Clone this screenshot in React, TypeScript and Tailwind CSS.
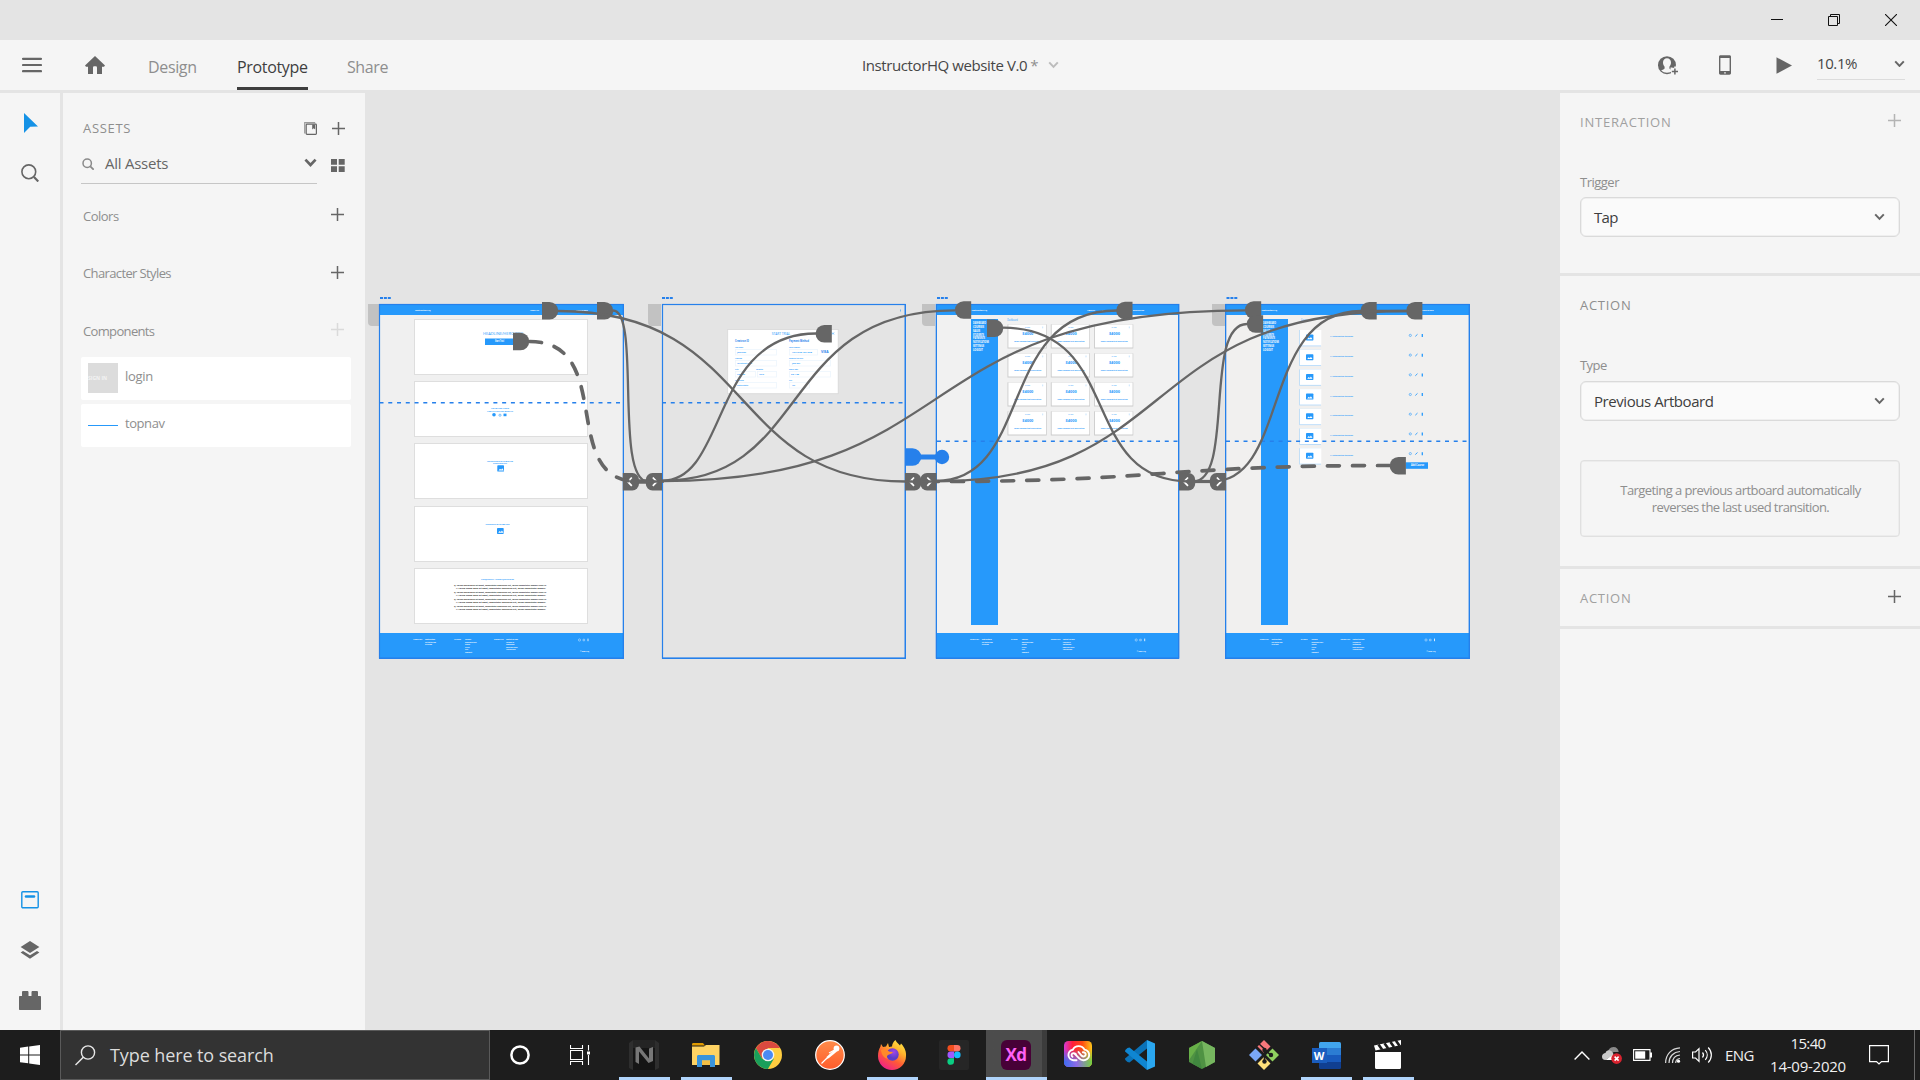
import type { ReactNode } from "react";

const BLUE = "#2699fb";
const SELECT = "#2680eb";
const WIRE = "#666666";

/* ---------- shared icons ---------- */

function Plus({ color = "#666666" }: { color?: string }) {
  return (
    <svg width="13" height="13" viewBox="0 0 13 13" className="shrink-0">
      <path d="M6.5 0v13M0 6.5h13" stroke={color} strokeWidth="1.5" />
    </svg>
  );
}

function Chevron({ w = 11, color = "#666666", sw = 2 }: { w?: number; color?: string; sw?: number }) {
  return (
    <svg width={w} height={w * 0.7} viewBox="0 0 11 7.7" className="shrink-0">
      <path d="M1.2 1.4 5.5 5.9l4.3-4.5" fill="none" stroke={color} strokeWidth={sw} />
    </svg>
  );
}

/* ---------- window chrome ---------- */

function TitleBar() {
  return (
    <div className="flex h-10 shrink-0 items-center justify-end bg-[#e4e4e4] pr-[23px]">
      <svg width="12" height="12" viewBox="0 0 12 12" className="mr-[45px]">
        <path d="M0 5.5h12" stroke="#111" />
      </svg>
      <svg width="12" height="12" viewBox="0 0 12 12" className="mr-[45px]">
        <path d="M.5 2.5h9v9h-9zM2.5 2.5v-2h9v9h-2" fill="none" stroke="#111" />
      </svg>
      <svg width="12" height="12" viewBox="0 0 12 12">
        <path d="M0 0l12 12M12 0L0 12" stroke="#111" strokeWidth="1.1" />
      </svg>
    </div>
  );
}

function Toolbar() {
  return (
    <div className="flex h-[53px] shrink-0 border-b-[3px] border-[#e4e4e4] bg-[#f5f5f5]">
      <div className="flex w-[862px] items-center pl-[22px]">
        <svg width="20" height="16" viewBox="0 0 20 16">
          <path d="M1 1.8h18M1 8h18M1 14.200h18" stroke="#666" strokeWidth="2.200" strokeLinecap="round" />
        </svg>
        <svg width="20" height="18" viewBox="0 0 20 18" className="ml-[43px]">
          <path d="M10 0 20 9.600 19 10.800h-2V18h-5v-6.300c0-1-.7-1.400-1.300-1.400h-1.400c-.6 0-1.300.4-1.300 1.400V18H3v-7.200H1L0 9.600z" fill="#666" />
        </svg>
        <div className="ml-[42px] flex h-full items-stretch text-[16px] text-[#8e8e8e]">
          <div className="flex w-[90px] items-center pl-px pt-1 tracking-[-0.35px]">Design</div>
          <div className="mr-[39px] flex w-[71px] items-center border-b-[3px] border-[#3e3e3e] pt-[7px] tracking-[-0.33px] text-[#3e3e3e]">Prototype</div>
          <div className="flex items-center pt-1 tracking-[-0.4px]">Share</div>
        </div>
      </div>
      <div className="flex flex-1 items-center">
        <span className="text-[15px] tracking-[-0.4px] text-[#464646]">InstructorHQ website V.0</span>
        <span className="ml-[3px] mr-[10px] text-[15px] text-[#8e8e8e]">*</span>
        <Chevron w={11} color="#bcbcbc" />
      </div>
      <div className="flex w-[262px] items-center">
        <svg width="20" height="19" viewBox="0 0 20 19" className="mr-[41px]">
          <circle cx="9" cy="9.200" r="9" fill="#666" />
          <path d="M9 2.300c2.300 0 4 1.700 4 4.200 0 1.700-.6 3.200-1.600 4.200v1.500c0 .5.300.8.800 1l2.700 1.200a8.300 8.300 0 0 1-11.800 0L5.800 13.200c.5-.2.800-.5.800-1v-1.500C5.600 9.700 5 8.200 5 6.500c0-2.500 1.700-4.200 4-4.200z" fill="#f5f5f5" />
          <path d="M12.500 14v-2.600h3v-3H20V19h-6.500z" fill="#f5f5f5" />
          <path d="M14.500 11.800V8h3.300c.1.800.1 1.800 0 2.500h-1.600v1.300z" fill="#666" />
          <path d="M16.900 12.400v6.200M13.800 15.500H20" stroke="#666" strokeWidth="1.500" />
        </svg>
        <svg width="12" height="20" viewBox="0 0 12 20" className="mr-[45px]">
          <path fillRule="evenodd" d="M1.500.3h9c.8 0 1.500.6 1.500 1.400v16.600c0 .8-.7 1.400-1.500 1.400h-9C.7 19.700 0 19.100 0 18.300V1.700C0 .9.700.3 1.500.3zM1.400 3v13h9.200V3zM5.200 17.200v1.300h1.600v-1.300z" fill="#666" />
        </svg>
        <svg width="16" height="17" viewBox="0 0 16 17" className="mr-[25px]">
          <path d="M.5.3 16 8.500.5 16.800z" fill="#666" />
        </svg>
        <div className="-mt-[1px] flex h-[30px] w-[88px] items-center justify-between border-b border-[#dcdcdc] pb-px">
          <span className="text-[15px] tracking-[-0.4px] text-[#464646]">10.1%</span>
          <Chevron w={11} />
        </div>
      </div>
    </div>
  );
}

/* ---------- left side ---------- */

function RailItem({ children }: { children: ReactNode }) {
  return <div className="flex h-[50px] items-center justify-center">{children}</div>;
}

function ToolRail() {
  return (
    <div className="flex w-[60px] shrink-0 flex-col bg-[#f5f5f5] pb-[5px] pt-[5px]">
      <RailItem>
        <svg width="14" height="20" viewBox="0 0 14 20" className="ml-0.5">
          <path d="M0 0 14 13.500 6.200 13.800 0 20z" fill="#1592e6" />
        </svg>
      </RailItem>
      <RailItem>
        <svg width="18" height="18" viewBox="0 0 18 18">
          <circle cx="7.800" cy="7.800" r="6.900" fill="none" stroke="#666" strokeWidth="1.600" />
          <path d="m13 13 4.300 4.500" stroke="#666" strokeWidth="2.200" />
        </svg>
      </RailItem>
      <div className="flex-1" />
      <RailItem>
        <svg width="18" height="18" viewBox="0 0 18 18">
          <rect x=".8" y=".8" width="16.400" height="16" rx="1" fill="none" stroke="#1592e6" strokeWidth="1.400" />
          <path d="M5 5.500h8" stroke="#1592e6" strokeWidth="2.600" strokeLinecap="round" />
        </svg>
      </RailItem>
      <RailItem>
        <svg width="20" height="18" viewBox="0 0 20 18">
          <path d="M10 0 19.400 6 10 12 .6 6z" fill="#666" />
          <path d="M.6 11.500 3 9.900l7 4.400 7-4.400 2.400 1.600L10 17.800z" fill="#666" />
        </svg>
      </RailItem>
      <RailItem>
        <svg width="22" height="19" viewBox="0 0 22 19">
          <path d="M1 5h2V1.200C3 .5 3.500 0 4.200 0h4C9 0 9.500.5 9.500 1.200V5h3V1.200c0-.7.5-1.200 1.200-1.200h4c.8 0 1.300.5 1.300 1.200V5h2c.6 0 1 .4 1 1v12c0 .6-.4 1-1 1H1c-.6 0-1-.4-1-1V6c0-.6.400-1 1-1z" fill="#666" />
        </svg>
      </RailItem>
    </div>
  );
}

function AssetsPanel() {
  return (
    <div className="flex w-[302px] shrink-0 flex-col bg-[#f5f5f5] pl-[18px] pr-[14px] pt-[22px]">
      <div className="flex h-[26px] items-center pl-0.5 pr-[6px]">
        <span className="flex-1 pt-0.5 text-[13px] tracking-[0.7px] text-[#8e8e8e]">ASSETS</span>
        <svg width="13" height="13" viewBox="0 0 13 13" className="mr-[15px]">
          <path d="M.7 11.500V.7h10.500" fill="none" stroke="#9a9a9a" strokeWidth="1.200" />
          <rect x="2.200" y="2.200" width="10.200" height="10.200" rx=".8" fill="none" stroke="#666" strokeWidth="1.200" />
          <path d="M8.200 2.500h3v5L9.700 6.300 8.200 7.500z" fill="#666" />
        </svg>
        <Plus />
      </div>
      <div className="flex h-[43px] pr-[6px]">
        <div className="mr-[14px] flex w-[236px] items-center border-b border-[#c6c6c6] pl-px pt-0.5">
          <svg width="12" height="12" viewBox="0 0 12 12" className="mt-0.5">
            <circle cx="5.200" cy="5.200" r="4.200" fill="none" stroke="#8a8a8a" strokeWidth="1.500" />
            <path d="m8.300 8.300 3.400 3.400" stroke="#8a8a8a" strokeWidth="1.800" />
          </svg>
          <span className="ml-[11px] flex-1 pt-px text-[15px] tracking-[-0.25px] text-[#666]">All Assets</span>
          <Chevron w={13} sw={2.300} />
        </div>
        <svg width="14" height="13" viewBox="0 0 14 13" className="mt-[17.5px]">
          <path d="M0 0h6v5.700H0zM7.700 0h6v5.700h-6zM0 7.300h6V13H0zM7.700 7.300h6V13h-6z" fill="#666" />
        </svg>
      </div>
      <div className="mt-4 flex h-8 items-center justify-between pl-0.5 pr-[7px] text-[13px] text-[#8e8e8e]">
        <span className="pt-0.5 tracking-[-0.5px]">Colors</span>
        <div className="-mt-[3px]"><Plus /></div>
      </div>
      <div className="mt-[25px] flex h-8 items-center justify-between pl-0.5 pr-[7px] text-[13px] text-[#8e8e8e]">
        <span className="pt-0.5 tracking-[-0.62px]">Character Styles</span>
        <div className="-mt-[2px]"><Plus /></div>
      </div>
      <div className="mb-2.5 mt-[26px] flex h-8 items-center justify-between pl-0.5 pr-[7px] text-[13px] text-[#8e8e8e]">
        <span className="pt-0.5 tracking-[-0.65px]">Components</span>
        <div className="-mt-[3px]"><Plus color="#dadada" /></div>
      </div>
      <div className="mb-1 flex h-[43px] items-center rounded-[2px] bg-white pl-[7px]">
        <div className="-mt-px flex h-[30px] w-[30px] items-center overflow-hidden bg-[#dcdcdc] text-[5px] leading-none font-bold text-[#f3f3f3]">
          <span className="whitespace-nowrap">SIGN IN</span>
        </div>
        <span className="ml-[7px] -mt-[3px] text-[13px] tracking-[-0.3px] text-[#8e8e8e]">login</span>
      </div>
      <div className="flex h-[43px] items-center rounded-[2px] bg-white pl-[7px]">
        <div className="-mt-px h-px w-[30px] bg-[#2699fb]" />
        <span className="ml-[7px] -mt-[3px] text-[13px] tracking-[-0.43px] text-[#8e8e8e]">topnav</span>
      </div>
    </div>
  );
}

/* ---------- canvas ---------- */

type TinyProps = { x: number; y: number; w: number; t: string; c?: string; s?: number; b?: boolean };

function Tiny({ x, y, w, t, c = "#fff", s = 2.4, b = true }: TinyProps) {
  return (
    <text x={x} y={y} fontSize={s} textLength={w} lengthAdjust="spacingAndGlyphs" fill={c} fontWeight={b ? 700 : 400}>
      {t}
    </text>
  );
}

function Artboard({ className, children }: { className: string; children?: ReactNode }) {
  return <div className={`absolute top-[211px] h-[355px] border border-[#2680eb] ${className}`}>{children}</div>;
}

function SiteFrame({ sidebar, inset = "ml-[34px]" }: { sidebar?: boolean; inset?: string }) {
  return (
    <div className="flex h-full flex-col">
      <div className="h-[10px] bg-[#2699fb]" />
      <div className="flex flex-1 flex-col items-start pb-2 pt-1">
        {sidebar && <div className={`${inset} w-[27px] flex-1 bg-[#2699fb]`} />}
      </div>
      <div className="h-[25px] bg-[#2699fb]" />
    </div>
  );
}

function FooterText({ dx }: { dx: number }) {
  const cols: [number, string[], number[]][] = [
    [425, ["Instructors", "Get Started Now", "Pricing"], [10, 11, 7]],
    [465, ["Courses", "Dashboard page", "Signup", "Pricing", "Login", "Support"], [6, 11.5, 5, 4.5, 3, 7]],
    [506, ["Contact Us page", "Facebook Us", "Instagram", "Email and Phone", "Address page"], [12, 8, 8.5, 11.5, 9.5]],
  ];
  return (
    <g transform={`translate(${dx} 0)`}>
      <Tiny x={413.3} y={640} w={9} t="COMPANY" s={1.8} />
      <Tiny x={454.3} y={640} w={6.5} t="PAGES" s={1.8} />
      <Tiny x={494} y={640} w={9.7} t="CONTACT" s={1.8} />
      {cols.map(([x, lines, ws]) => lines.map((l, i) => <Tiny key={`${x}${l}`} x={x} y={640 + i * 2.6} w={ws[i]} t={l} s={2} />))}
      <g fill="none" stroke="#d9edff" strokeWidth=".5">
        <circle cx="579.5" cy="640" r="1.1" />
        <path d="M583 639.200h1.600v1.600H583z" />
        <path d="M588 638.600v2.600" strokeWidth="1" />
      </g>
      <Tiny x={580} y={652} w={9} t="© 2020 IHQ" s={1.900} />
    </g>
  );
}

function NavText({ x, links }: { x: number; links: [number, number, string][] }) {
  return (
    <g>
      <Tiny x={x} y={311} w={15.5} t="InstructorHQ" s={2.4} />
      {links.map(([lx, w, t]) => (
        <Tiny key={lx} x={lx} y={311} w={w} t={t} s={2.2} />
      ))}
    </g>
  );
}

function SideText({ x }: { x: number }) {
  const rows: [string, number][] = [["DASHBOARD", 13], ["COURSES", 11], ["SALES", 7], ["STUDENTS", 11], ["PAYMENTS", 12], ["NOTIFICATIONS", 16], ["SETTINGS", 11], ["LOGOUT", 10]];
  return (
    <g>
      {rows.map(([t, w], i) => (
        <Tiny key={t} x={x} y={324 + i * 3.85} w={w} t={t} s={2.5} />
      ))}
    </g>
  );
}

function PictureIcon({ x, y, w = 7.4, h = 6 }: { x: number; y: number; w?: number; h?: number }) {
  return (
    <g>
      <rect x={x} y={y} width={w} height={h} rx=".7" fill={BLUE} />
      <path d={`M${x + 1.2} ${y + h - 1.2}l1.500-1.700 1.200 1 1-1.500 1.600 2.200z`} fill="#fff" />
    </g>
  );
}

function LandingPage() {
  const cards = [319.5, 381.5, 443.5, 506.5, 568.5];
  return (
    <g>
      {cards.map((y) => (
        <rect key={y} x="414.5" y={y} width="173" height="55" fill="#fff" stroke="#dedede" />
      ))}
      <NavText x={415} links={[[530, 9, "ABOUT US"], [560, 8, "LOGIN"], [576, 11.7, "REGISTER"]]} />
      <Tiny x={483} y={334.6} w={40} t="HEADLINE/HERO BOX" c={BLUE} s={3.5} b={false} />
      <rect x="485" y="338.500" width="34" height="6.500" fill={BLUE} />
      <Tiny x={495} y={342.4} w={9} t="Start Trial" s={2.6} />
      <Tiny x={491} y={409.3} w={18} t="HEADLINE HERO" c={BLUE} />
      <Tiny x={487} y={411.5} w={26} t="HOW THE CREATOR BENEFITS" c={BLUE} />
      <circle cx="494" cy="414.800" r="1.800" fill={BLUE} />
      <circle cx="500" cy="415.200" r="1.100" fill="none" stroke={BLUE} strokeWidth=".6" />
      <path d="M503.500 413.600h3v2.600h-3z" fill={BLUE} />
      <Tiny x={487} y={462.3} w={26} t="INSTRUCTOR DASHBOARD" c={BLUE} />
      <Tiny x={493} y={464.3} w={14} t="SCREENSHOT" c={BLUE} />
      <PictureIcon x={497.3} y={465.3} w={6.7} h={6.3} />
      <Tiny x={485.5} y={525} w={24} t="STUDENTS DASHBOARD" c={BLUE} />
      <PictureIcon x={497} y={528} w={6.7} h={6} />
      <Tiny x={481} y={580} w={33} t="FREQUENTLY ASKED QUESTIONS" c={BLUE} />
      {[0, 1, 2, 3].map((i) => (
        <g key={i}>
          <Tiny x={454} y={586.4 + i * 7} w={92.5} t="Q. Lorem ipsum dolor sit amet, consectetur adipiscing elit, lorem consectetur semper nunc in." c="#222" s={2.4} />
          <Tiny x={456} y={589 + i * 7} w={90} t="A. Lorem ipsum dolor sit amet, consectetur adipiscing elit, lorem consectetur semper." c="#222" s={2.4} />
        </g>
      ))}
      <FooterText dx={0} />
    </g>
  );
}

function SignupCard() {
  const labels: [number, number, number, string][] = [
    [735, 347.8, 8, "Your name"], [735, 359, 7, "Address"], [735, 370, 3.5, "City"], [756, 370, 7, "Country"], [735, 381, 9, "Currency"],
    [789, 347.8, 11, "Card number"], [789, 359, 14, "Name on the card"], [789, 370, 9, "Expiry date"], [789, 381, 3, "CVV"],
  ];
  const fields: [number, number, number][] = [
    [735.5, 349.5, 41], [735.5, 360.5, 41], [735.5, 371.5, 20], [757.5, 371.5, 19], [735.5, 382.5, 41],
    [789.5, 349.5, 28], [789.5, 360.5, 41], [789.5, 371.5, 41], [789.5, 382.5, 20],
  ];
  const values: [number, number, number, string][] = [
    [737, 353, 9, "John Doe"], [737, 364, 15, "123 Street Road"], [737, 375, 8, "London"], [759, 375, 5, "12345"], [737, 386, 11, "United States"],
    [792, 353, 20, "1234 5678 1234 5678"], [792, 364, 8, "John Doe"], [791, 375, 8, "09 / 22"], [792, 386, 3, "123"],
  ];
  return (
    <g>
      <rect x="727.700" y="329.500" width="110.500" height="64.200" fill="#fff" stroke="#d8d8d8" strokeWidth=".8" />
      <Tiny x={771.7} y={334.8} w={18.5} t="START TRIAL" c={BLUE} s={3.3} b={false} />
      <Tiny x={735} y={342} w={14} t="Create an ID" c={SELECT} s={2.7} />
      <Tiny x={789} y={342} w={20} t="Payment Method" c={SELECT} s={2.7} />
      <path d="M832 332.500l2 2M834 332.500l-2 2M900.500 309.500v2" stroke={BLUE} strokeWidth=".6" />
      {fields.map(([x, y, w]) => (
        <rect key={`${x}-${y}`} x={x} y={y} width={w} height="5.500" fill="none" stroke="#edf5fd" strokeWidth=".8" />
      ))}
      {labels.map(([x, y, w, t]) => (
        <Tiny key={`${x}-${y}`} x={x} y={y} w={w} t={t} c={BLUE} s={2.2} />
      ))}
      {values.map(([x, y, w, t]) => (
        <Tiny key={`${x}-${y}`} x={x} y={y} w={w} t={t} c={BLUE} s={2.4} />
      ))}
      <Tiny x={821} y={353.3} w={7.5} t="VISA" c={SELECT} s={2.8} />
    </g>
  );
}

function DashboardPage() {
  const xs = [1007.7, 1051, 1094.3];
  const ys = [324.3, 353.3, 382.3, 411.3];
  return (
    <g>
      <NavText x={971.5} links={[[1087, 8, "ABOUT"], [1102, 8.5, "LOGIN"], [1132.7, 11.5, "REGISTER"]]} />
      <SideText x={973} />
      <Tiny x={1007.3} y={321.2} w={10.5} t="Dashboard" c={BLUE} s={2.6} b={false} />
      {ys.map((y) =>
        xs.map((x) => (
          <g key={`${x}-${y}`}>
            <rect x={x - 0.2} y={y} width="39.200" height="24.200" fill="#cccccc" />
            <rect x={x + 0.7} y={y + 0.2} width="37.600" height="23" fill="#fff" />
            <Tiny x={x + 17.3} y={y + 3.8} w={5} t="SALES" c={BLUE} s={2} b={false} />
            <path d={`M${x + 35} ${y + 2.2}v1.800`} stroke="#b9dcfb" strokeWidth=".8" />
            <Tiny x={x + 14.6} y={y + 10.6} w={11} t="$4000" c={BLUE} s={3.5} />
            <Tiny x={x + 6.5} y={y + 17.8} w={27} t="some random text description" c={BLUE} s={2.4} />
          </g>
        )),
      )}
      <FooterText dx={556.7} />
    </g>
  );
}

function CoursesPage() {
  return (
    <g>
      <NavText x={1261.5} links={[[1376.7, 8.5, "ABOUT"], [1392, 8, "LOGIN"], [1422, 11.7, "REGISTER"]]} />
      <SideText x={1263} />
      <Tiny x={1301} y={321.2} w={8} t="Courses" c={BLUE} s={2.6} b={false} />
      {[0, 1, 2, 3, 4, 5, 6].map((i) => {
        const y = 330 + i * 19.7;
        return (
          <g key={i}>
            <rect x="1299.300" y={y} width="21.700" height="16.300" fill="#b0d7fa" />
            <rect x="1300" y={y} width="21.300" height="15.500" fill="#fff" />
            <PictureIcon x={1306} y={y + 4.5} />
            <Tiny x={1330} y={y + 7.4} w={23} t="#1  Introduction to design" c={BLUE} s={2.3} />
            <circle cx="1410.300" cy={y + 5.4} r="1.100" fill="none" stroke={BLUE} strokeWidth=".6" />
            <path d={`M1415.300 ${y + 6.4}l2.200-2.100`} stroke={BLUE} strokeWidth=".9" />
            <path d={`M1422.300 ${y + 4}v3`} stroke={BLUE} strokeWidth="1.300" />
          </g>
        );
      })}
      <rect x="1405.500" y="462.300" width="22.500" height="6.500" fill={BLUE} />
      <Tiny x={1411} y={466.4} w={13} t="Add Course" s={2.5} />
      <FooterText dx={846.5} />
    </g>
  );
}

/* Half-round grips at the ends of the wires; `dir` is the rounded side. */
function Grip({ x, y, dir, fill = WIRE }: { x: number; y: number; dir: "l" | "r"; fill?: string }) {
  const d =
    dir === "r"
      ? `M${x} ${y}h7.500a8.750 8.750 0 0 1 0 17.500h-7.500z`
      : `M${x + 16.2} ${y}h-7.500a8.750 8.750 0 0 0 0 17.500h7.500z`;
  return <path d={d} fill={fill} />;
}

function Target({ x, dir }: { x: number; dir: "l" | "r" }) {
  const y = 473;
  const c = dir === "r" ? `M${x + 9} ${y + 4.5}l-4 4.200 4 4.200` : `M${x + 7} ${y + 4.5}l4 4.200-4 4.200`;
  const body =
    dir === "r"
      ? `M${x} ${y}h9.500a6.700 6.700 0 0 1 6.700 6.700v4.100a6.700 6.700 0 0 1-6.700 6.700h-9.500z`
      : `M${x + 16.2} ${y}h-9.500a6.700 6.700 0 0 0-6.700 6.700v4.100a6.700 6.700 0 0 0 6.700 6.700h9.500z`;
  return (
    <g>
      <path d={body} fill={WIRE} />
      <path d={c} fill="none" stroke="#fff" strokeWidth="1.700" />
    </g>
  );
}

function Dots({ x }: { x: number }) {
  return <path d={`M${x} 297h3v2h-3zM${x + 3.9} 297h3v2h-3zM${x + 7.8} 297h3v2h-3z`} fill={SELECT} />;
}

function Canvas() {
  return (
    <div className="relative flex-1 overflow-hidden bg-[#e4e4e4]">
      <div className="absolute left-[3px] top-[211px] h-[22px] w-[11px] rounded-bl-[4px] bg-[#c2c2c2]" />
      <div className="absolute left-[283px] top-[211px] h-[22px] w-[13px] rounded-bl-[4px] bg-[#c2c2c2]" />
      <div className="absolute left-[557px] top-[211px] h-[22px] w-[13px] rounded-bl-[4px] bg-[#c2c2c2]" />
      <div className="absolute left-[847px] top-[211px] h-[22px] w-[13px] rounded-bl-[4px] bg-[#c2c2c2]" />
      <Artboard className="left-[14px] w-[245px] bg-[#f0f0f0]"><SiteFrame /></Artboard>
      <Artboard className="left-[297px] w-[244px]" />
      <Artboard className="left-[571px] w-[243px] bg-[#f1f1f1]"><SiteFrame sidebar /></Artboard>
      <Artboard className="left-[860px] w-[245px] bg-[#f1f0ef]"><SiteFrame sidebar inset="ml-[35px]" /></Artboard>

      <svg className="absolute left-0 top-0" width="1195" height="937" viewBox="365 93 1195 937" fontFamily="'Open Sans', sans-serif">
        <Dots x={380} />
        <Dots x={662} />
        <Dots x={937} />
        <Dots x={1226.5} />
        <LandingPage />
        <SignupCard />
        <DashboardPage />
        <CoursesPage />

        <g stroke={SELECT} strokeWidth="1.400" strokeDasharray="4 4.760">
          <path d="M379.500 402.700H623M662 402.700H905" />
          <path d="M937 441.300H1179M1226 441.300H1469" />
        </g>
        <g fill="none" stroke={SELECT} strokeWidth="1.200">
          <rect x="379.500" y="304.500" width="243.800" height="353.500" />
          <rect x="662.500" y="304.500" width="242.600" height="353.500" />
          <rect x="936.300" y="304.500" width="242.500" height="353.500" />
          <rect x="1225.700" y="304.500" width="243.500" height="353.500" />
        </g>

        <Grip x={542} y={302} dir="r" />
        <Grip x={597} y={302} dir="r" />
        <Grip x={513} y={332.7} dir="r" />
        <Grip x={815.6} y={325} dir="l" />
        <Grip x={955} y={301.3} dir="l" />
        <Grip x={1116.3} y={301.8} dir="l" />
        <Grip x={987} y={319.5} dir="r" />
        <Grip x={1245} y={301.3} dir="l" />
        <Grip x={1246.9} y={315.3} dir="l" />
        <Grip x={1360.5} y={302} dir="l" />
        <Grip x={1406.2} y={302} dir="l" />
        <Grip x={1389.7} y={457} dir="l" />

        <Target x={622.8} dir="r" />
        <Target x={645.8} dir="l" />
        <Target x={905} dir="r" />
        <Target x={920.3} dir="l" />
        <Target x={1179} dir="r" />
        <Target x={1209.9} dir="l" />

        <path d="M912 457h30" stroke={SELECT} strokeWidth="5" />
        <Grip x={905} y={448.3} dir="r" fill={SELECT} />
        <circle cx="942" cy="457" r="7.200" fill={SELECT} />

        <g fill="none" stroke={WIRE} strokeWidth="2.300">
          <path d="M558 311C758 311 725.500 481.500 905.500 481.500H912" />
          <path d="M613 310.500C641 310.500 614 481.500 648 481.500" />
          <path d="M662 480.800C728 480.800 710 333.500 816 333.500" />
          <path d="M662 480.800C812 480.800 777 310.300 955 310.300" />
          <path d="M662 481C970 481 903 310.300 1246 310.300" />
          <path d="M936 481C1034 481 996 310.500 1117 310.500" />
          <path d="M936 481.300C1181 481.300 1136 311 1406 311" />
          <path d="M1003 327.700C1125 327.700 1077 481.500 1190 481.500" />
          <path d="M1193 481.500C1235 481.500 1203 324 1247 324" />
          <path d="M1212 481.500C1290 481.500 1260 311 1361 311" />
          <path d="M1370 311h40" />
          <path d="M648 481.500H664M922 481.500H938" />
        </g>
        <g fill="none" stroke={WIRE}>
          <path d="M638 481.500h10" strokeWidth="4.500" />
          <path d="M1192 481.500h22" strokeWidth="3.200" />
        </g>
        <g fill="none" stroke={WIRE} strokeWidth="3.700" strokeLinecap="round" strokeDasharray="12 13.100">
          <path d="M529.500 341.500C617 341.500 557 481.500 638 481.500" />
          <path d="M1389.700 465.500C1162 465.500 1162 481.500 936 481.500" />
        </g>
      </svg>
    </div>
  );
}

/* ---------- right side ---------- */

function Select({ children, className }: { children: string; className: string }) {
  return (
    <div className="flex h-10 items-center justify-between rounded-[6px] border border-[#dadada] bg-[#fafafa] pl-[13px] pr-[14px] text-[15px] text-[#3e3e3e] shadow-[inset_0_0_0_0.5px_#e4e4e4]">
      <span className={className}>{children}</span>
      <Chevron w={11} />
    </div>
  );
}

function Inspector() {
  return (
    <div className="flex w-[360px] shrink-0 flex-col gap-[3px] bg-[#e4e4e4] text-[13px] text-[#8e8e8e]">
      <div className="flex h-[180px] flex-col bg-[#f5f5f5] px-5 pt-[19px]">
        <div className="-mr-px flex h-5 items-center justify-between text-[#a0a0a0]">
          <span className="pt-0.5 tracking-[0.78px]">INTERACTION</span>
          <div className="-mt-[3px]"><Plus color="#b4b4b4" /></div>
        </div>
        <div className="mt-[39px] flex h-[22px] items-center pt-px tracking-[-0.5px]">Trigger</div>
        <div className="mt-1"><Select className="tracking-[-0.7px]">Tap</Select></div>
      </div>
      <div className="flex h-[290px] flex-col bg-[#f5f5f5] px-5 pt-[19px]">
        <div className="flex h-5 items-center pt-0.5 tracking-[0.73px]">ACTION</div>
        <div className="mt-[39px] flex h-[22px] items-center pt-0.5 tracking-[-0.56px]">Type</div>
        <div className="mb-[39px] mt-[5px]"><Select className="tracking-[-0.44px]">Previous Artboard</Select></div>
        <div className="flex h-[77px] flex-col items-center justify-center rounded-[4px] border border-[#e0e0e0] pl-px text-center leading-[17px] shadow-[inset_0_0_0_0.5px_#e4e4e4]">
          <div className="tracking-[-0.57px]">Targeting a previous artboard automatically</div>
          <div className="tracking-[-0.59px]">reverses the last used transition.</div>
        </div>
      </div>
      <div className="flex h-[57px] items-center justify-between bg-[#f5f5f5] pl-5 pr-[19px] text-[#a0a0a0]">
        <span className="pt-0.5 tracking-[0.73px]">ACTION</span>
        <div className="-mt-[2px]"><Plus /></div>
      </div>
      <div className="flex-1 bg-[#f5f5f5]" />
    </div>
  );
}

/* ---------- taskbar ---------- */

function Task({ open, active, children }: { open?: boolean; active?: boolean; children: ReactNode }) {
  return (
    <div className={`relative flex h-full w-[62px] items-center justify-center ${active ? "border-l border-[#1d1d1d] pr-px bg-gradient-to-r from-[#4c4c4c] from-[91%] to-[#3c3c3c] to-[91%]" : ""}`}>
      {children}
      {open && <div className={`absolute bottom-0 h-[3px] bg-[#b0d4fb] ${active ? "inset-x-0" : "left-1.5 w-[51px]"}`} />}
    </div>
  );
}

function Taskbar() {
  return (
    <div className="flex h-[50px] shrink-0 bg-[#1d1d1d]">
      <div className="flex w-[60px] items-center justify-center">
        <svg width="20" height="20" viewBox="0 0 20 20">
          <path d="M0 2.800 8.200 1.600v7.800H0zM9.200 1.500 20 0v9.400H9.200zM0 10.400h8.200v7.900L0 17.200zM9.200 10.400H20V20L9.200 18.500z" fill="#fff" />
        </svg>
      </div>
      <div className="flex w-[430px] items-center border border-[#5a5a5a] bg-[#333] pl-[14px]">
        <svg width="21" height="21" viewBox="0 0 21 21">
          <circle cx="13" cy="7.500" r="6.600" fill="none" stroke="#e8e8e8" strokeWidth="1.400" />
          <path d="M8.300 12.200.5 20" stroke="#e8e8e8" strokeWidth="1.500" />
        </svg>
        <span className="ml-[14px] text-[18px] tracking-[-0.1px] text-[#dcdcdc]">Type here to search</span>
      </div>
      <div className="flex w-[60px] items-center justify-center">
        <svg width="20" height="20" viewBox="0 0 20 20">
          <circle cx="10" cy="10" r="8.600" fill="none" stroke="#fff" strokeWidth="2.500" />
        </svg>
      </div>
      <div className="flex w-[63px] items-center justify-center pr-[3px]">
        <svg width="20" height="20" viewBox="0 0 20 20">
          <path d="M.5 0v3.500h12V0M.5 5.500h12v9H.5zM.5 20v-3.500h12V20M18.500 0v5.500M18.500 10v10" fill="none" stroke="#fff" strokeWidth="1.100" />
          <path d="M17 6.500h3v3h-3z" fill="#fff" />
        </svg>
      </div>

      <Task open>
        <svg width="30" height="30" viewBox="0 0 30 30">
          <path d="M0 3 4 0v30L0 28zM30 3l-4-3v30l4-2z" fill="#2e2e2e" />
          <path d="M4 0h22v30H4z" fill="#151515" />
          <path d="M4 0h22v8H4z" fill="#242424" />
          <path d="M6.500 22V7.500l4-1L20 18.500V8.500l4-1.500v14l-4.500 2L10 11.500V24z" fill="#777" />
        </svg>
      </Task>
      <Task open>
        <svg width="28" height="24" viewBox="0 0 28 24">
          <path d="M0 1.500C0 .7.500 0 1.300 0H11l2 2.500H0z" fill="#e09a00" />
          <path d="M0 3.500h12l2-1.500h13.500v20H0z" fill="#ffd363" />
          <path d="M5 24V13.500c0-.8.600-1.500 1.500-1.500h15c.9 0 1.500.7 1.500 1.500V24h-5v-6.500h-8V24z" fill="#3a94dc" />
          <path d="M10 17.500h8V22h-8z" fill="#f3bf45" />
        </svg>
      </Task>
      <Task>
        <svg width="28" height="28" viewBox="0 0 28 28">
          <circle cx="14" cy="14" r="14" fill="#ffcd40" />
          <path d="M14 7h12.100A14 14 0 0 0 1.900 7L8 17.500z" fill="#db4a3f" />
          <path d="M1.900 7a14 14 0 0 0 12 21l6.100-10.500-6 2.500-6-2.500z" fill="#1a9f5b" />
          <circle cx="14" cy="14" r="6.300" fill="#f3f3f3" />
          <circle cx="14" cy="14" r="5" fill="#4a8af4" />
        </svg>
      </Task>
      <Task>
        <svg width="30" height="30" viewBox="0 0 30 30">
          <defs>
            <linearGradient id="pm" x1="0" y1="0" x2="0" y2="1"><stop offset="0" stopColor="#ff8c4a" /><stop offset="1" stopColor="#ff5c2b" /></linearGradient>
          </defs>
          <circle cx="15" cy="15" r="14.300" fill="url(#pm)" stroke="#fff" strokeWidth="1.200" />
          <circle cx="21.500" cy="8.500" r="2.900" fill="#fff" />
          <path d="M19.500 9.500 12 16.500l-1 3 3-1.500 8-6.500z" fill="#fff" />
          <path d="M12 18 6.500 23.500M14 13l5.500-3" stroke="#fff" strokeWidth="1.200" />
        </svg>
      </Task>
      <Task open>
        <svg width="30" height="30" viewBox="0 0 30 30">
          <defs>
            <linearGradient id="ff" x1=".9" y1="0" x2=".3" y2="1"><stop offset="0" stopColor="#fff04a" /><stop offset=".35" stopColor="#ffb22c" /><stop offset=".65" stopColor="#ff5a36" /><stop offset="1" stopColor="#f0208a" /></linearGradient>
            <radialGradient id="fg" cx=".6" cy=".3"><stop offset="0" stopColor="#a345e8" /><stop offset="1" stopColor="#5a3ec8" /></radialGradient>
          </defs>
          <path d="M18.500 0c1 2.500 3 3.500 4.500 5.500l1-2c4 4 5.500 9 5 12.500A14 14 0 0 1 1 16C1 12 2 9 3.500 6.500L4 4l2 3 3-.5L11 3l1 4 3-.5c0-2.500 1.500-5 3.500-6.500z" fill="url(#ff)" />
          <circle cx="15.500" cy="14.500" r="6.200" fill="url(#fg)" />
          <path d="M4 10c3-2 6-1 8 1.500 1.500.5 3 .3 4 .5-1 2-3 2-4.500 2.800-2 .5-2 2.500-.5 4.200-4-1-6.500-4-7-9z" fill="#ff8a2a" />
        </svg>
      </Task>
      <Task>
        <svg width="30" height="30" viewBox="0 0 30 30">
          <rect width="30" height="30" rx="2" fill="#262626" />
          <g transform="translate(8.500 5)">
            <path d="M6.500 0v6.600H3.300a3.300 3.300 0 0 1 0-6.600z" fill="#f24e1e" />
            <path d="M6.500 0h3.200a3.300 3.300 0 0 1 0 6.600H6.500z" fill="#ff7262" />
            <path d="M6.500 6.600v6.600H3.300a3.300 3.300 0 0 1 0-6.600z" fill="#a259ff" />
            <circle cx="9.800" cy="9.900" r="3.300" fill="#1abcfe" />
            <path d="M6.500 13.200v3.300a3.300 3.300 0 1 1-3.200-3.300z" fill="#0acf83" />
          </g>
        </svg>
      </Task>
      <Task open active>
        <div className="flex h-[30px] w-[30px] items-center justify-center rounded-[6px] bg-[#470137] pb-px text-[17px] font-bold tracking-[-0.5px] text-[#ff61f6]">Xd</div>
      </Task>
      <Task>
        <svg width="28" height="26" viewBox="0 0 28 26" className="-mt-0.5">
          <defs>
            <linearGradient id="cc1" x1="0" x2="1"><stop offset="0" stopColor="#d83bd8" /><stop offset=".3" stopColor="#ff1e3c" /><stop offset=".65" stopColor="#ff4a10" /><stop offset="1" stopColor="#ffc61a" /></linearGradient>
            <linearGradient id="cc2" x1="0" x2="1"><stop offset="0" stopColor="#3b6df0" /><stop offset=".45" stopColor="#8d6ae8" /><stop offset="1" stopColor="#74d23c" /></linearGradient>
            <linearGradient id="cc3" x1="0" y1="0" x2="0" y2="1"><stop offset=".3" stopColor="#000" /><stop offset=".8" stopColor="#fff" /></linearGradient>
            <mask id="ccm"><rect width="28" height="26" fill="url(#cc3)" /></mask>
          </defs>
          <rect width="28" height="26" rx="4.500" fill="url(#cc1)" />
          <rect width="28" height="26" rx="4.500" fill="url(#cc2)" mask="url(#ccm)" />
          <g fill="none" stroke="#fff" strokeWidth="1.900" strokeLinecap="round">
            <path d="M12.500 19.200H9.300a5.300 5.300 0 0 1-.5-10.500A6.600 6.600 0 0 1 20.500 8.600a5.300 5.300 0 0 1-1.300 10.600c-1.700 0-2.800-.6-4-1.800l-4.200-4.300" />
            <path d="M8.500 15.800a2 2 0 0 1 1-3.700c1 0 1.700.4 2.400 1.100M14.500 11l3.200 3.800c1.500 1.400 4 .4 4-1.300 0-1.600-1.200-2.400-2.800-2.300" />
          </g>
        </svg>
      </Task>
      <Task>
        <svg width="30" height="30" viewBox="0 0 30 30">
          <path d="M22 0v8.500L4.500 22.500 2.500 22 .300 20 0 18.500z" fill="#0a72b8" />
          <path d="M22 30v-8.500L4.500 7.500 2.500 8 .3 10 0 11.500z" fill="#0f86d2" />
          <path d="M22 0l8 3.500v23L22 30z" fill="#2aa7f0" />
        </svg>
      </Task>
      <Task>
        <svg width="26" height="28" viewBox="0 0 26 28">
          <path d="M13 0 26 7v14l-13 7L0 21V7z" fill="#4f9243" />
          <path d="M13 0 26 7v14l-9 5z" fill="#76b65f" />
          <path d="M13 0 0 7v12z" fill="#68b048" />
          <path d="M8 8 13 28 3.500 22.800z" fill="#41873f" />
        </svg>
      </Task>
      <Task>
        <svg width="30" height="30" viewBox="0 0 30 30">
          <path d="M15 0l6.500 6.500-6.500 6.500-6.500-6.500z" fill="#f7777b" />
          <path d="M6.500 8.500l6.500 6.500-6.500 6.500L0 15z" fill="#7aa7f7" />
          <path d="M23.500 8.500 30 15l-6.500 6.500L17 15z" fill="#8fd05f" />
          <path d="M15 17l6.500 6.500L15 30l-6.500-6.500z" fill="#ffe07a" />
          <path d="M9.500 3.500 15.500 9v14M15.500 9l6 6" fill="none" stroke="#1d1d1d" strokeWidth="1.600" />
          <circle cx="15.500" cy="10" r="2.200" fill="#1d1d1d" />
          <circle cx="15.500" cy="21.500" r="2.200" fill="#1d1d1d" />
          <circle cx="22" cy="15" r="2.200" fill="#1d1d1d" />
        </svg>
      </Task>
      <Task open>
        <div className="relative h-[27px] w-[29px]">
          <div className="ml-[7px] flex h-full flex-col overflow-hidden rounded-[1.500px]">
            <div className="flex-1 bg-[#41a5ee]" />
            <div className="flex-1 bg-[#2b7cd3]" />
            <div className="flex-1 bg-[#185abd]" />
            <div className="flex-1 bg-[#103f91]" />
          </div>
          <div className="absolute left-0 top-[6px] flex h-[15px] w-[15px] items-center justify-center bg-[#1a5dbe] text-[11px] leading-none font-bold text-white">W</div>
        </div>
      </Task>
      <Task open>
        <svg width="28" height="30" viewBox="0 0 28 30">
          <path d="M1 12h26v15.500c0 .8-.6 1.500-1.400 1.500H2.400C1.600 29 1 28.300 1 27.500z" fill="#fff" />
          <path d="M0 5.500 27 0v5L1.500 10.500z" fill="#fff" />
          <path d="M4.500 4.500l3.500 5M10.500 3.200l3.500 5M16.500 2l3.500 5M22 .8l3.500 5" stroke="#1d1d1d" strokeWidth="2.600" />
        </svg>
      </Task>

      <div className="flex flex-1 items-center justify-end text-[15px] text-[#f0f0f0]">
        <svg width="16" height="9" viewBox="0 0 16 9" className="mr-3">
          <path d="M.6 8.400 8 1l7.400 7.400" fill="none" stroke="#fff" strokeWidth="1.400" />
        </svg>
        <svg width="20" height="17" viewBox="0 0 20 17" className="mr-[11px]">
          <path d="M6 7c-.5-4 2-7 5.500-7 3 0 5 2 5.200 5H12z" fill="#8a8a8a" />
          <path d="M3.500 13C1 13 0 11.500 0 9.500S2 6 3.500 6c.5-2 2.500-3 4.500-2.500 2 .5 3 2 3.500 4z" fill="#c9c9c9" />
          <path d="M3.500 13 11 7.500V13z" fill="#fff" />
          <circle cx="14.600" cy="11.600" r="5.300" fill="#d8232f" />
          <path d="m12.600 9.600 4 4M16.600 9.600l-4 4" stroke="#fff" strokeWidth="1.500" />
        </svg>
        <svg width="19" height="12" viewBox="0 0 19 12" className="mr-[13px]">
          <path d="M.600.600h16.400v10.800H.6zM17.500 4h1v4h-1z" fill="none" stroke="#fff" strokeWidth="1.100" />
          <path d="M2.200 2.300h10v7.400h-10z" fill="#fff" />
        </svg>
        <svg width="16" height="16" viewBox="0 0 16 16" className="mr-[11px]">
          <g fill="none" stroke="#d8d8d8" strokeWidth="1.200">
            <path d="M.6 16C.6 7.500 6.500 1.200 15 .8" />
            <path d="M4 16C4 9.500 8.500 5 15 4.500" />
            <path d="M7.500 16c0-4.500 3-7.500 7.500-8" />
            <path d="M10.700 16c0-2.500 1.800-4.300 4.300-4.500" />
          </g>
          <circle cx="13.500" cy="14.200" r="1.600" fill="#fff" />
        </svg>
        <svg width="21" height="18" viewBox="0 0 21 18" className="mr-[12px]">
          <path d="M.6 6h3L7 2.600v12.800L3.600 12h-3z" fill="none" stroke="#fff" strokeWidth="1.200" />
          <path d="M10.500 6.500c1.300 1.500 1.300 3.500 0 5M13.300 4.200c2.500 2.800 2.500 6.800 0 9.600M16.200 1.500c4.200 4.300 4.200 10.700 0 15" fill="none" stroke="#fff" strokeWidth="1.200" />
        </svg>
        <span className="w-[44px] tracking-[-0.55px]">ENG</span>
        <div className="flex w-[78px] flex-col items-center leading-[23px]">
          <span className="tracking-[-0.65px]">15:40</span>
          <span className="tracking-[-0.25px]">14-09-2020</span>
        </div>
        <svg width="20" height="20" viewBox="0 0 20 20" className="ml-[22px] mr-[25px]">
          <path d="M.6.600h18.800v16H12.500L10 19l-2.500-2.400H.6z" fill="none" stroke="#fff" strokeWidth="1.200" />
        </svg>
        <div className="mr-[5px] h-full w-px bg-[#6a6a6a]" />
      </div>
    </div>
  );
}

export default function App() {
  return (
    <div className="flex h-[1080px] w-[1920px] flex-col overflow-hidden bg-[#e4e4e4] font-['Open_Sans',sans-serif]">
      <TitleBar />
      <Toolbar />
      <div className="flex min-h-0 flex-1">
        <ToolRail />
        <div className="w-[3px] shrink-0 bg-[#e4e4e4]" />
        <AssetsPanel />
        <Canvas />
        <Inspector />
      </div>
      <Taskbar />
    </div>
  );
}
